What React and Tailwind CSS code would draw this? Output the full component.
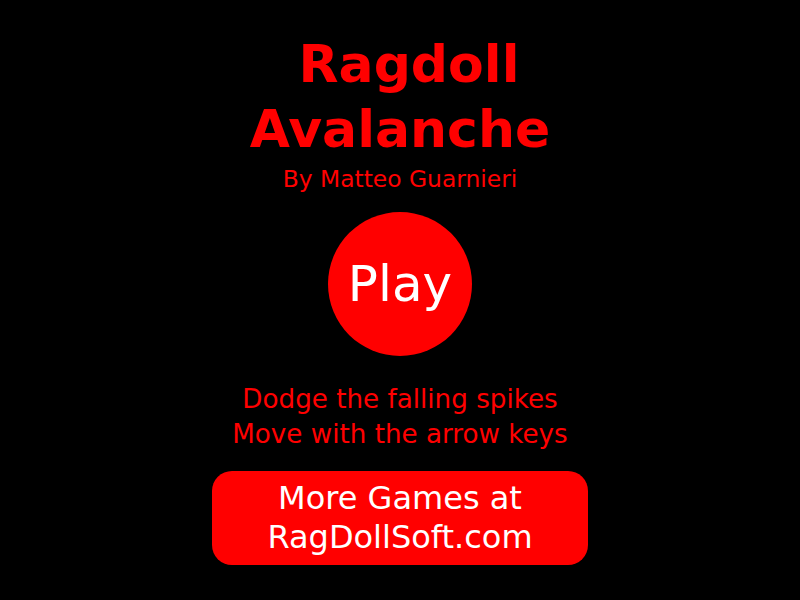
export default function App() {
  return (
    <div className="w-[800px] h-[600px] bg-black flex flex-col items-center font-['DejaVu_Sans',sans-serif] text-[#ff0000] overflow-hidden">
      <h1 className="mt-[32px] text-center font-bold text-[52px] leading-[65px]">
        <span className="block pl-[18px]">Ragdoll</span>
        <span className="block">Avalanche</span>
      </h1>
      <p className="mt-[3px] text-[23.4px] leading-[28px]">By Matteo Guarnieri</p>

      <button className="mt-[19px] w-[144px] h-[144px] rounded-full bg-[#ff0000] text-white text-[50px] flex items-center justify-center">
        Play
      </button>

      <div className="mt-[26px] text-center text-[26.2px] leading-[35px]">
        <p>Dodge the falling spikes</p>
        <p>Move with the arrow keys</p>
      </div>

      <a className="mt-[19px] w-[376px] h-[94px] rounded-[20px] bg-[#ff0000] text-white text-[32px] leading-[39px] flex flex-col items-center justify-center">
        <span>More Games at</span>
        <span>RagDollSoft.com</span>
      </a>
    </div>
  );
}
